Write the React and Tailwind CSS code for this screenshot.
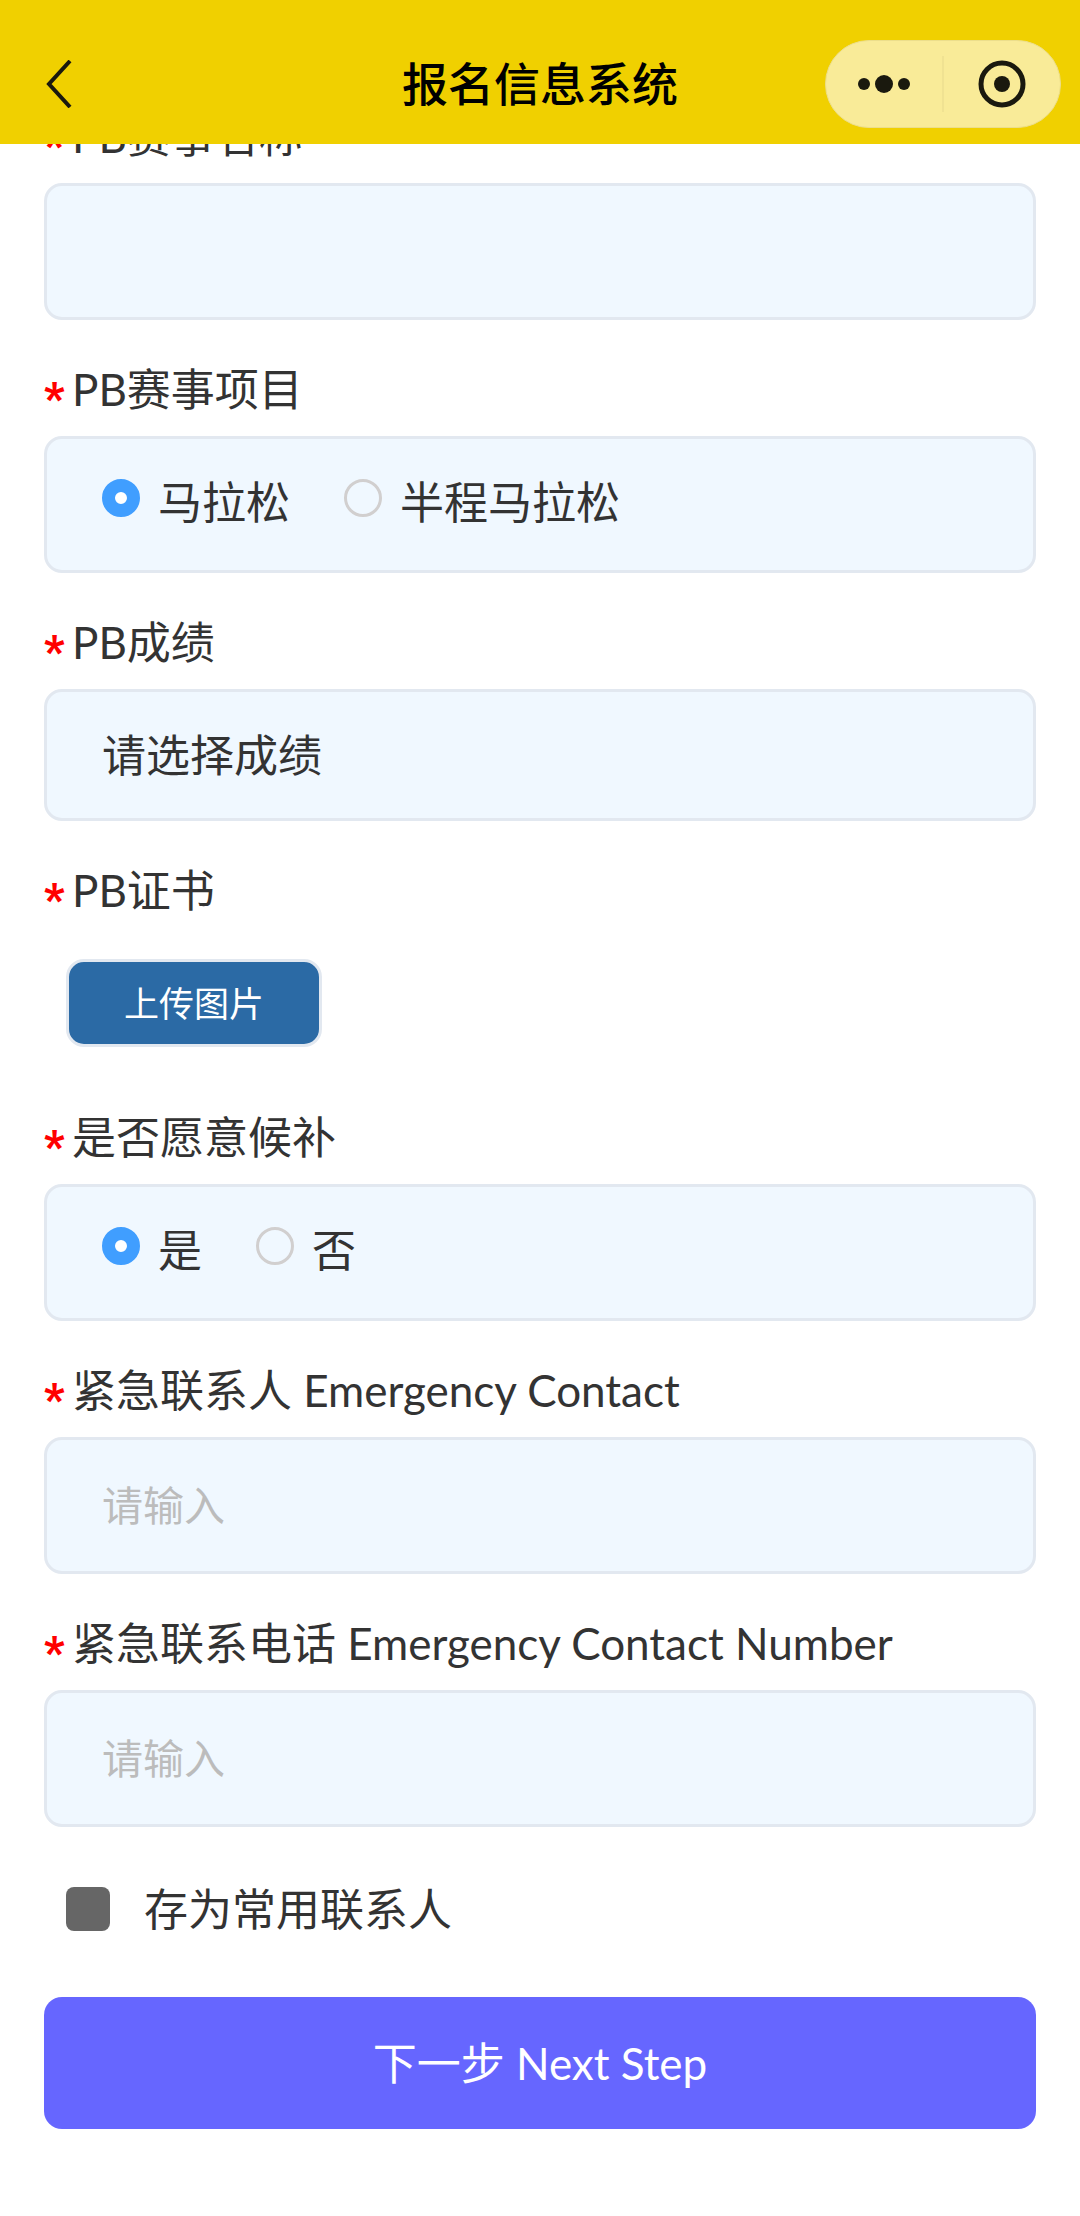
import { useState } from 'react';

const boxClass =
  'block w-full rounded-[18px] border-[3px] border-[#e2e8f0] bg-[#f0f8ff] px-[55px] text-[#333333]';

const raceOptions = ['马拉松', '半程马拉松'];
const waitlistOptions = ['是', '否'];

const NavBar = () => (
  <header className="fixed inset-x-0 top-0 z-50 grid h-36 grid-cols-[1fr_auto_1fr] items-center bg-[#f0d000] pt-6">
    <button type="button" aria-label="返回" className="ml-11 h-12 w-8 justify-self-start">
      <svg viewBox="0 0 32 48" className="h-12 w-8" fill="none" stroke="#1a190e" strokeWidth="4">
        <path d="M26 1 L5 24 L26 47" />
      </svg>
    </button>

    <h1 className="text-[46px] leading-[60px] font-medium text-black">报名信息系统</h1>

    {/* Menu and close capsule */}
    <div className="mr-[19px] flex h-[88px] w-[236px] items-center justify-self-end rounded-full border border-[#ecde8c] bg-[#f9eb98]">
      <button type="button" aria-label="更多" className="flex h-full flex-1 items-center justify-center">
        <svg viewBox="0 0 56 24" className="h-6 w-14" fill="#1a190e">
          <circle cx="8" cy="12" r="6" />
          <circle cx="28" cy="12" r="9" />
          <circle cx="48" cy="12" r="6" />
        </svg>
      </button>
      <span className="h-14 w-[2px] bg-[#f0e292]" />
      <button type="button" aria-label="关闭" className="flex h-full flex-1 items-center justify-center">
        <svg viewBox="0 0 48 48" className="h-12 w-12">
          <circle cx="24" cy="24" r="21" fill="none" stroke="#1a190e" strokeWidth="5" />
          <circle cx="24" cy="24" r="8" fill="#1a190e" />
        </svg>
      </button>
    </div>
  </header>
);

const Star = () => (
  <span aria-hidden="true" className="w-7 pt-5 font-['Roboto'] text-[44px] leading-[44px] font-black text-[#ff0000]">
    *
  </span>
);

const labelClass = 'flex h-[66px] items-center text-[44px] leading-[66px] text-[#333333]';

const Field = ({ id, label, children }) => (
  <div className="pt-9">
    <label htmlFor={id} className={labelClass}>
      <Star />
      {label}
    </label>
    <div className="pt-[14px]">{children}</div>
  </div>
);

const RadioField = ({ name, label, options }) => {
  const [value, setValue] = useState(options[0]);

  return (
    <fieldset className="pt-9">
      <legend className="contents">
        <span className={labelClass}>
          <Star />
          {label}
        </span>
      </legend>
      <div className="pt-[14px]">
        <div className={`${boxClass} flex h-[137px] items-center gap-[54px] pb-1.5`}>
          {options.map((option) => (
            <label key={option} className="flex items-center gap-[18px] text-[44px] leading-[66px]">
              <input
                type="radio"
                name={name}
                value={option}
                checked={value === option}
                onChange={() => setValue(option)}
                className="mb-2 size-[38px] appearance-none rounded-full border-[3px] border-[#d1cfcf] checked:border-[13px] checked:border-[#409eff] checked:bg-white"
              />
              {option}
            </label>
          ))}
        </div>
      </div>
    </fieldset>
  );
};

const TextField = ({ id, label, placeholder }) => (
  <Field id={id} label={label}>
    <input
      id={id}
      type="text"
      placeholder={placeholder}
      className={`${boxClass} h-[137px] text-[41px] placeholder:text-[#bcbcbc]`}
    />
  </Field>
);

export default function App() {
  const [saved, setSaved] = useState(false);

  return (
    <div className="min-h-screen bg-white font-['Lato','Noto_Sans_CJK_SC',sans-serif]">
      <NavBar />

      <form className="px-11 pt-[67px] pb-[88px]" onSubmit={(e) => e.preventDefault()}>
        <TextField id="race-name" label="PB赛事名称" />
        <RadioField name="race-type" label="PB赛事项目" options={raceOptions} />

        <Field id="result" label="PB成绩">
          <select id="result" className={`${boxClass} h-[132px] appearance-none text-[44px]`}>
            <option>请选择成绩</option>
          </select>
        </Field>

        <Field id="certificate" label="PB证书">
          <div className="px-[22px] pt-[22px] pb-[21px]">
            <button
              id="certificate"
              type="button"
              className="h-[88px] w-64 rounded-[18px] border-[3px] border-[#e2e8f0] bg-[#2b6aa5] text-[35px] text-white"
            >
              上传图片
            </button>
          </div>
        </Field>

        <RadioField name="waitlist" label="是否愿意候补" options={waitlistOptions} />
        <TextField id="contact" label="紧急联系人 Emergency Contact" placeholder="请输入" />
        <TextField id="phone" label="紧急联系电话 Emergency Contact Number" placeholder="请输入" />

        <label className="mt-[60px] flex h-11 items-center gap-[34px] px-[22px] text-[44px] leading-[44px] text-[#333333]">
          <input
            type="checkbox"
            checked={saved}
            onChange={(e) => setSaved(e.target.checked)}
            className="size-11 appearance-none rounded-lg bg-[#666666] checked:bg-[#409eff]"
          />
          存为常用联系人
        </label>

        <button
          type="submit"
          className="mt-[66px] h-[132px] w-full rounded-[18px] bg-[#6666ff] text-[44px] text-white"
        >
          下一步 Next Step
        </button>
      </form>
    </div>
  );
}
